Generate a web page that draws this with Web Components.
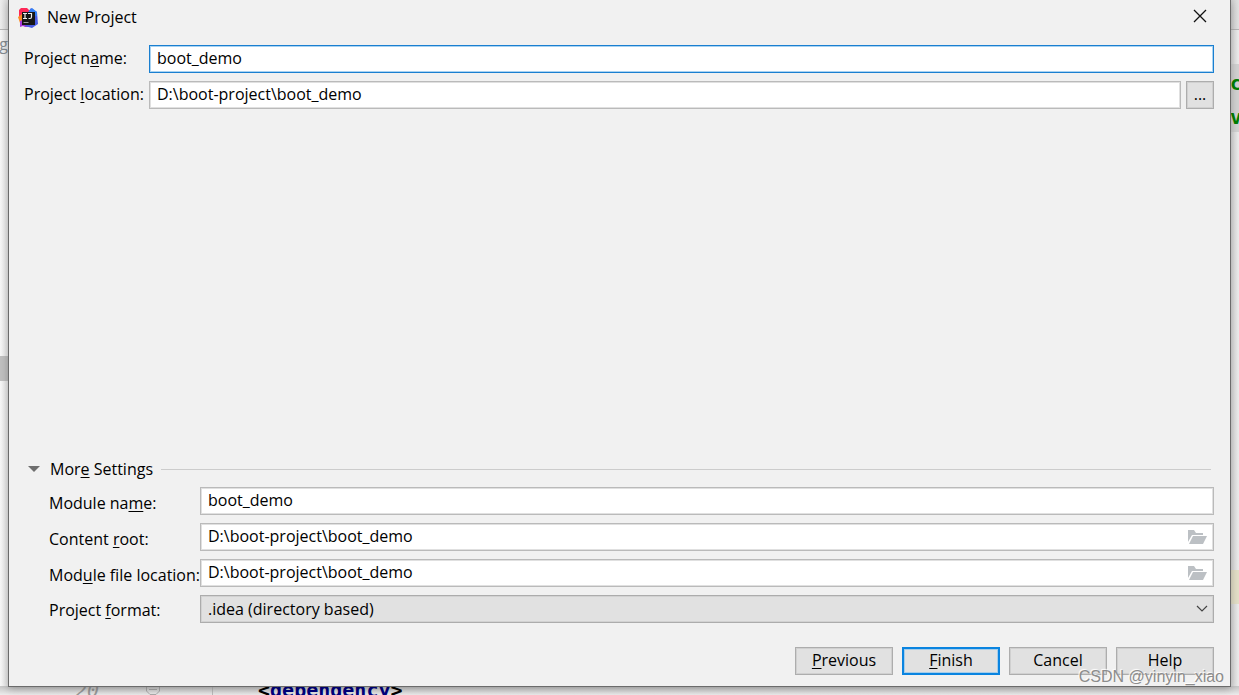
<!DOCTYPE html>
<html lang="en">
<head>
<meta charset="utf-8">
<title>New Project</title>
<style>
  body { margin: 0; background: #fff; color: #000; font: 16px/20px "Open Sans", "Noto Sans", sans-serif; }
</style>
</head>
<body>
<project-window></project-window>

<template id="editor-backdrop">
  <style>
    :host { position: absolute; inset: 0; z-index: -1; display: grid; grid-template: minmax(0, 1fr) 9px / 9px minmax(0, 1fr) 9px; overflow: hidden; background: #f4f4f4; font: 20px/34px "DejaVu Sans Mono", monospace; }
    .side { display: flex; flex-direction: column; overflow: hidden; background: linear-gradient(90deg, #f8f8f8, #e2e2e2); }
    .right { grid-column: 3; background: linear-gradient(90deg, #d6d6d6, #ececec); }
    .bar { flex: none; box-sizing: border-box; height: 30px; border-bottom: 1px solid #b5b5b5; background: #0000000a; }
    .crumb { height: 34px; font: 16px/28px "Open Sans", sans-serif; color: #858c91; display: flex; justify-content: flex-end; padding-right: 1px; }
    .thumb { height: 25px; background: #c0c0c0; margin-top: 292px; }
    .code { margin-top: 34px; background: #d2d2d2; color: #008000; font-weight: bold; line-height: 38px; height: 68px; }
    .code div { height: 34px; }
    .current { margin-top: 438px; height: 34px; background: #e3dfc8; }
    .line { grid-row: 2; grid-column: 1 / -1; display: flex; overflow: hidden; background: linear-gradient(#c6c6c6, #ececec); line-height: 20px; }
    .gutter { display: flex; box-sizing: border-box; width: 213px; padding-left: 75px; border-right: 1px solid #bbb; color: #999; font-style: italic; }
    .gutter svg { margin-left: 46px; }
    .line span { margin-top: -6px; }
    .tag { margin-left: 45px; font-weight: bold; }
    b { color: #000080; }
  </style>
  <div class="side"><div class="bar"></div><div class="crumb">g</div><div class="thumb"></div></div>
  <div class="side right"><div class="bar"></div><div class="code"><div>c</div><div>v</div></div><div class="current"></div></div>
  <div class="line">
    <div class="gutter"><span>20</span><svg width="16" height="9" viewBox="0 0 16 9" fill="none" stroke="#aaa"><path d="M1.500 0V5L5 8.500H11L14.500 5V0M4 3.500H12"/></svg></div>
    <span class="tag">&lt;<b>dependency</b>&gt;</span>
  </div>
</template>

<template id="title-bar">
  <style>
    :host { display: flex; align-items: center; height: 35px; padding: 0 15px 0 9px; }
    .logo { flex: none; margin-right: 9px; }
    h1 { flex: 1; margin: 0; padding-bottom: 2px; font: inherit; }
    button { display: flex; align-items: center; justify-content: center; width: 30px; height: 30px; padding: 0; border: 0; background: none; margin-bottom: 3px; }
  </style>
  <svg class="logo" width="20" height="20" viewBox="0 0 20 20" aria-hidden="true">
    <path d="M1 2 3 0H9L13 4 10 11 1 10Z" fill="#fe2857"/>
    <path d="M0 9 4 6l4 7-6 2Z" fill="#fc8b25"/>
    <path d="m2 13 7-3 3 9H7l-2-1-3 1Z" fill="#a83ad9"/>
    <path d="m10 4 3-4 6 4 1 12-6 4-7-2Z" fill="#4a5de4"/>
    <path d="m11 3 3-3 5 4v4h-7Z" fill="#3380f5"/>
    <path d="M4 4H17V17H4Z" fill="#161616"/>
    <path d="M5 5.500H9M7 5.500V10.500M5 10.500H9M10 5.500H13.500V9Q13.500 10.500 12 10.500H10.500" fill="none" stroke="#eee" stroke-width="1.200"/>
    <path d="M5.500 14.500H10.500" stroke="#999" stroke-width="1"/>
  </svg>
  <h1><slot></slot></h1>
  <button type="button" aria-label="Close"><svg width="14" height="14" viewBox="0 0 14 14" fill="none" stroke="#111" stroke-width="1.300"><path d="m1 1 12 12M13 1 1 13"/></svg></button>
</template>

<template id="text-field">
  <style>
    :host { display: grid; grid-template-columns: var(--label-width) minmax(0, 1fr) auto; align-items: center; min-height: 28px; }
    label { white-space: nowrap; padding-top: var(--label-top, 0); padding-bottom: var(--label-bottom, 2px); }
    .box { display: flex; align-items: center; box-sizing: border-box; height: 28px; border: 1px solid #bababa; background: #fff; outline: 1px solid #e0e0e0; outline-offset: -2px; }
    :host([active]) .box { border-color: #1a7fd0; outline-color: #a9d3f2; }
    input { flex: 1; min-width: 0; height: 26px; box-sizing: border-box; border: 0; outline: 0; padding: 0 7px 2px; background: none; font: inherit; color: inherit; }
    .folder { display: none; margin-right: 6px; padding: 0; border: 0; background: none; }
    :host([folder]) .folder { display: flex; }
  </style>
  <label for="field"><slot name="label"></slot></label>
  <div class="box">
    <input id="field" type="text" spellcheck="false">
    <button class="folder" type="button" aria-label="Browse folders"><svg width="20" height="16" viewBox="0 0 20 16" fill="#bcc0c4"><path d="M1 1H7L9 4H16V6H5L1 13Z"/><path d="M6 7H20L16 15H2Z"/></svg></button>
  </div>
  <slot name="action"></slot>
</template>

<template id="select-field">
  <style>
    :host { display: grid; grid-template-columns: var(--label-width) minmax(0, 1fr); align-items: center; }
    label { white-space: nowrap; padding-top: 2px; }
    .box { display: grid; align-items: center; }
    select, svg { grid-area: 1 / 1; }
    select { appearance: none; width: 100%; height: 28px; box-sizing: border-box; border: 1px solid #acacac; outline: 1px solid #d2d2d2; outline-offset: -2px; border-radius: 0; padding: 0 28px 0 7px; background: #e1e1e1; font: inherit; color: inherit; }
    svg { justify-self: end; margin-right: 6px; pointer-events: none; }
    u { text-decoration-thickness: 1px; text-underline-offset: 2px; }
  </style>
  <label for="format">Project <u>f</u>ormat:</label>
  <div class="box">
    <select id="format"><option>.idea (directory based)</option><option>.ipr (file based)</option></select>
    <svg width="12" height="8" viewBox="0 0 12 8" fill="none" stroke="#444" stroke-width="1.200"><path d="m1 1 5 5 5-5"/></svg>
  </div>
</template>

<template id="push-button">
  <style>
    :host { display: block; width: 98px; }
    :host([compact]) { width: 28px; margin-left: 5px; }
    button { display: block; width: 100%; height: 28px; box-sizing: border-box; padding: 0 0 2px; border: 1px solid #adadad; outline: 1px solid #d0d0d0; outline-offset: -2px; border-radius: 0; background: #e1e1e1; font: inherit; color: inherit; }
    :host([primary]) button { border: 2px solid #0a84e0; outline-color: #a5cdea; outline-offset: -3px; }
  </style>
  <button type="button"><slot></slot></button>
</template>

<template id="settings-section">
  <style>
    :host { display: block; --label-width: 151px; --label-top: 4px; --label-bottom: 0; }
    .head { display: flex; align-items: center; margin: 0 3px 8px 4px; }
    button { display: flex; align-items: center; gap: 10px; padding: 0; border: 0; background: none; font: inherit; color: inherit; }
    .rule { flex: 1; height: 1px; margin-left: 8px; background: #ccc; }
    .rows { display: grid; gap: 8px; padding-left: 25px; }
  </style>
  <div class="head">
    <button type="button" aria-expanded="true"><svg width="12" height="8" viewBox="0 0 12 8" fill="#6e6e6e"><path d="M0 1H12L6 7Z"/></svg><span><slot name="heading"></slot></span></button>
    <div class="rule"></div>
  </div>
  <div class="rows"><slot></slot></div>
</template>

<template id="project-window">
  <style>
    :host { display: flex; position: relative; min-height: 100vh; }
    .dialog { flex: 1; min-width: 0; display: flex; flex-direction: column; margin: 0 8px; margin-bottom: 8px; border: 1px solid #6b6b6b; border-top: 0; background: #f1f1f1; box-shadow: 0 2px 8px #0004; }
    .content { flex: 1; display: flex; flex-direction: column; padding: 10px 16px 11px 15px; }
    .main { display: grid; gap: 8px; --label-width: 125px; }
    settings-section { margin-top: auto; }
    .buttons { display: flex; justify-content: flex-end; gap: 9px; margin-top: 24px; }
    u { text-decoration-thickness: 1px; text-underline-offset: 2px; }
    .watermark { position: absolute; right: 15px; bottom: 8px; font: 16px/20px "Liberation Sans", Arial, sans-serif; color: #8c8c8c; text-shadow: -1px -1px 1px #fff; pointer-events: none; }
  </style>
  <editor-backdrop></editor-backdrop>
  <div class="dialog">
    <title-bar>New Project</title-bar>
    <div class="content">
      <div class="main">
        <text-field active value="boot_demo"><span slot="label">Project n<u>a</u>me:</span></text-field>
        <text-field value="D:\boot-project\boot_demo"><span slot="label">Project <u>l</u>ocation:</span><push-button slot="action" compact>...</push-button></text-field>
      </div>
      <settings-section>
        <span slot="heading">Mor<u>e</u> Settings</span>
        <text-field value="boot_demo"><span slot="label">Module na<u>m</u>e:</span></text-field>
        <text-field folder value="D:\boot-project\boot_demo"><span slot="label">Content <u>r</u>oot:</span></text-field>
        <text-field folder value="D:\boot-project\boot_demo"><span slot="label">Mod<u>u</u>le file location:</span></text-field>
        <select-field></select-field>
      </settings-section>
      <div class="buttons">
        <push-button><u>P</u>revious</push-button>
        <push-button primary><u>F</u>inish</push-button>
        <push-button>Cancel</push-button>
        <push-button>Help</push-button>
      </div>
    </div>
  </div>
  <div class="watermark">CSDN @yinyin_xiao</div>
</template>

<script>
  class TemplateElement extends HTMLElement {
    constructor() {
      super();
      const template = document.getElementById(this.localName);
      this.attachShadow({ mode: "open" }).append(template.content.cloneNode(true));
    }
  }
  class EditorBackdrop extends TemplateElement {}
  class TitleBar extends TemplateElement {}
  class SelectField extends TemplateElement {}
  class PushButton extends TemplateElement {}
  class SettingsSection extends TemplateElement {}
  class ProjectWindow extends TemplateElement {}
  class TextField extends TemplateElement {
    connectedCallback() {
      this.shadowRoot.querySelector("input").value = this.getAttribute("value") || "";
    }
  }
  customElements.define("editor-backdrop", EditorBackdrop);
  customElements.define("title-bar", TitleBar);
  customElements.define("text-field", TextField);
  customElements.define("select-field", SelectField);
  customElements.define("push-button", PushButton);
  customElements.define("settings-section", SettingsSection);
  customElements.define("project-window", ProjectWindow);
</script>
</body>
</html>
